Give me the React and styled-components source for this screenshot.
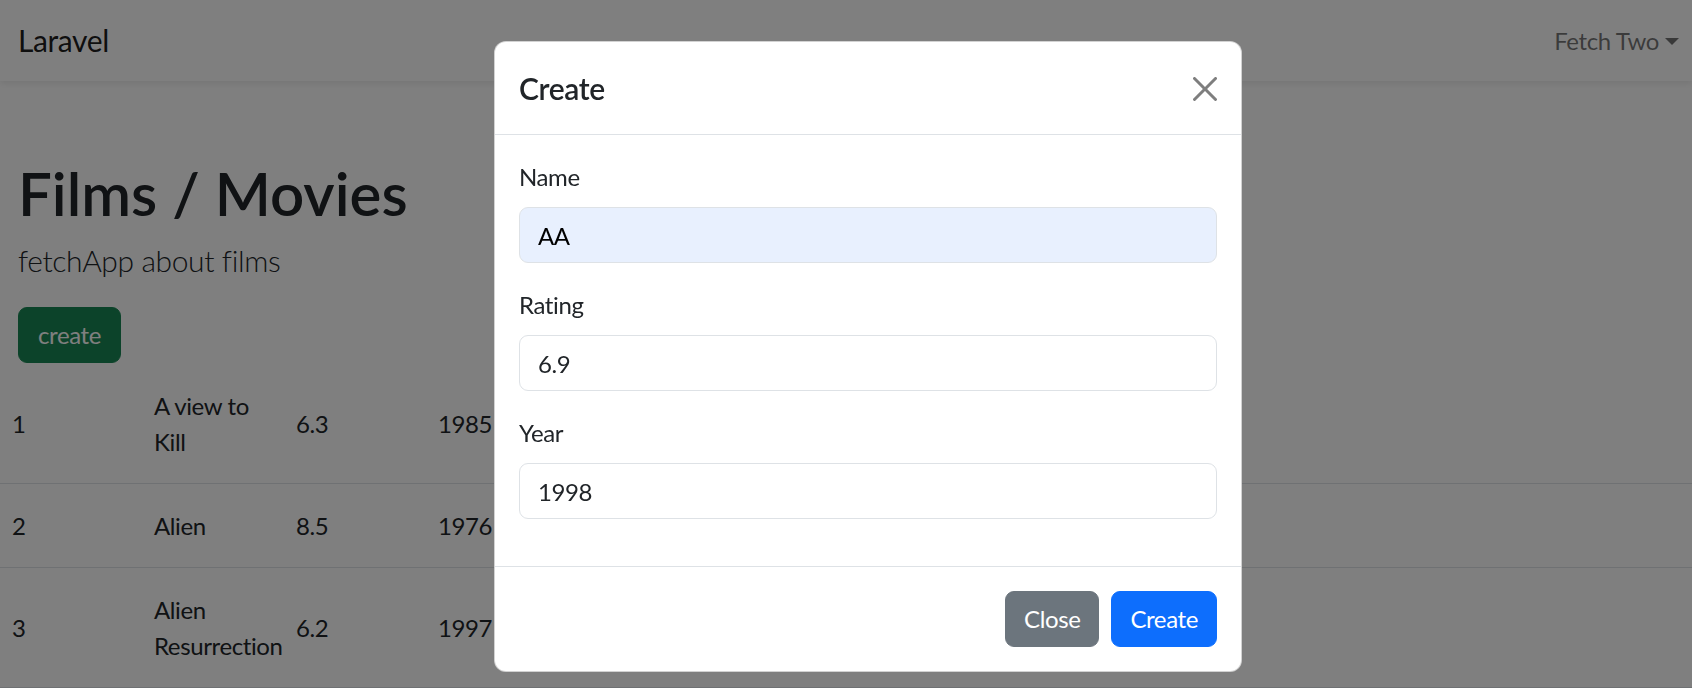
import React from "react";
import styled, { createGlobalStyle } from "styled-components";

const GlobalStyle = createGlobalStyle`
  *, *::before, *::after { box-sizing: border-box; }
  html, body { margin: 0; padding: 0; }
  body {
    font-family: Lato, "Liberation Sans", sans-serif;
    font-size: 24px;
    line-height: 36px;
    letter-spacing: -0.016em;
    color: #212529;
    background: #fff;
    overflow: hidden;
  }
`;

const Page = styled.div`
  width: 1692px;
  height: 688px;
  overflow: hidden;
`;

const Navbar = styled.nav`
  height: 81px;
  display: flex;
  align-items: center;
  justify-content: space-between;
  padding: 0 13px 0 18px;
  background: #fff;
  box-shadow: 0 3px 6px rgba(0, 0, 0, 0.075);
  position: relative;
`;

const Brand = styled.a`
  font-size: 30px;
  line-height: 45px;
  color: rgba(0, 0, 0, 0.9);
  text-decoration: none;
`;

const DropdownToggle = styled.a`
  display: flex;
  align-items: center;
  color: rgba(0, 0, 0, 0.55);
  text-decoration: none;
  font-size: 24px;
  line-height: 36px;
  &::after {
    content: "";
    display: inline-block;
    margin-left: 6px;
    margin-top: 2px;
    border-top: 7px solid currentColor;
    border-left: 7px solid transparent;
    border-right: 7px solid transparent;
  }
`;

const Container = styled.main`
  padding: 76px 18px 1px;
`;

const Title = styled.h1`
  margin: 0 0 9px;
  font-size: 60px;
  line-height: 72px;
  font-weight: 600;
  letter-spacing: 0;
`;

const Lead = styled.p`
  margin: 0 0 24px;
  font-size: 30px;
  line-height: 45px;
  font-weight: 300;
`;

const Button = styled.button`
  height: 56px;
  padding: 0 ${(p) => p.$padX || 18}px;
  border: 1px solid ${(p) => p.$bg};
  border-radius: 9px;
  background: ${(p) => p.$bg};
  color: #fff;
  font-family: inherit;
  font-size: 24px;
  letter-spacing: inherit;
  line-height: 36px;
  cursor: pointer;
`;

const Table = styled.table`
  width: 100%;
  border-collapse: collapse;
  table-layout: fixed;
`;

const Cell = styled.td`
  width: ${(p) => (p.$filler ? "auto" : "142px")};
  padding: 24px 12px 23px;
  vertical-align: middle;
  border-bottom: 1px solid #dee2e6;
  line-height: 36px;
  word-break: normal;
`;

const Backdrop = styled.div`
  position: fixed;
  inset: 0;
  background: rgba(0, 0, 0, 0.5);
  padding: 41px 0 0 494px;
`;

const Dialog = styled.div`
  width: 748px;
  background: #fff;
  border: 1px solid rgba(0, 0, 0, 0.175);
  border-radius: 12px;
  overflow: hidden;
`;

const ModalHeader = styled.div`
  display: flex;
  align-items: center;
  justify-content: space-between;
  padding: 24px 24px 23px;
  border-bottom: 1px solid #dee2e6;
`;

const ModalTitle = styled.h5`
  margin: 0;
  font-size: 30px;
  line-height: 45px;
  font-weight: 600;
`;

const CloseX = styled.button`
  width: 24px;
  height: 24px;
  padding: 0;
  border: 0;
  background: transparent;
  opacity: 0.5;
  display: flex;
  cursor: pointer;
`;

const ModalBody = styled.div`
  padding: 24px 24px 23px;
`;

const Field = styled.div`
  margin-bottom: 24px;
`;

const Label = styled.label`
  display: block;
  margin-bottom: 12px;
  line-height: 36px;
`;

const Input = styled.input`
  display: block;
  width: 100%;
  height: 56px;
  padding: 0 18px;
  border: 1px solid #dee2e6;
  border-radius: 9px;
  font-family: inherit;
  font-size: 24px;
  letter-spacing: inherit;
  color: ${(p) => (p.$autofill ? "#000" : "#212529")};
  background: ${(p) => (p.$autofill ? "#e8f0fe" : "#fff")};
  outline: none;
`;

const ModalFooter = styled.div`
  display: flex;
  justify-content: flex-end;
  gap: 12px;
  padding: 24px;
  border-top: 1px solid #dee2e6;
`;

const films = [
  { id: 1, name: "A view to Kill", rating: "6.3", year: 1985 },
  { id: 2, name: "Alien", rating: "8.5", year: 1976 },
  { id: 3, name: "Alien Resurrection", rating: "6.2", year: 1997 },
];

export default function App() {
  return (
    <Page>
      <GlobalStyle />
      <Navbar>
        <Brand href="#">Laravel</Brand>
        <DropdownToggle href="#">Fetch Two</DropdownToggle>
      </Navbar>
      <Container>
        <Title>Films / Movies</Title>
        <Lead>fetchApp about films</Lead>
        <Button $bg="#198754" $padX={19}>create</Button>
      </Container>
      <Table>
        <tbody>
          {films.map((f) => (
            <tr key={f.id}>
              <Cell>{f.id}</Cell>
              <Cell>{f.name}</Cell>
              <Cell>{f.rating}</Cell>
              <Cell>{f.year}</Cell>
              <Cell $filler />
            </tr>
          ))}
        </tbody>
      </Table>
      <Backdrop>
        <Dialog>
          <ModalHeader>
            <ModalTitle>Create</ModalTitle>
            <CloseX aria-label="Close">
              <svg width="24" height="24" viewBox="0 0 16 16">
                <path
                  fill="#000"
                  d="M.293.293a1 1 0 0 1 1.414 0L8 6.586 14.293.293a1 1 0 1 1 1.414 1.414L9.414 8l6.293 6.293a1 1 0 0 1-1.414 1.414L8 9.414l-6.293 6.293a1 1 0 0 1-1.414-1.414L6.586 8 .293 1.707a1 1 0 0 1 0-1.414z"
                />
              </svg>
            </CloseX>
          </ModalHeader>
          <ModalBody>
            <Field>
              <Label>Name</Label>
              <Input $autofill defaultValue="AA" />
            </Field>
            <Field>
              <Label>Rating</Label>
              <Input defaultValue="6.9" />
            </Field>
            <Field>
              <Label>Year</Label>
              <Input defaultValue="1998" />
            </Field>
          </ModalBody>
          <ModalFooter>
            <Button $bg="#6c757d">Close</Button>
            <Button $bg="#0d6efd">Create</Button>
          </ModalFooter>
        </Dialog>
      </Backdrop>
    </Page>
  );
}
